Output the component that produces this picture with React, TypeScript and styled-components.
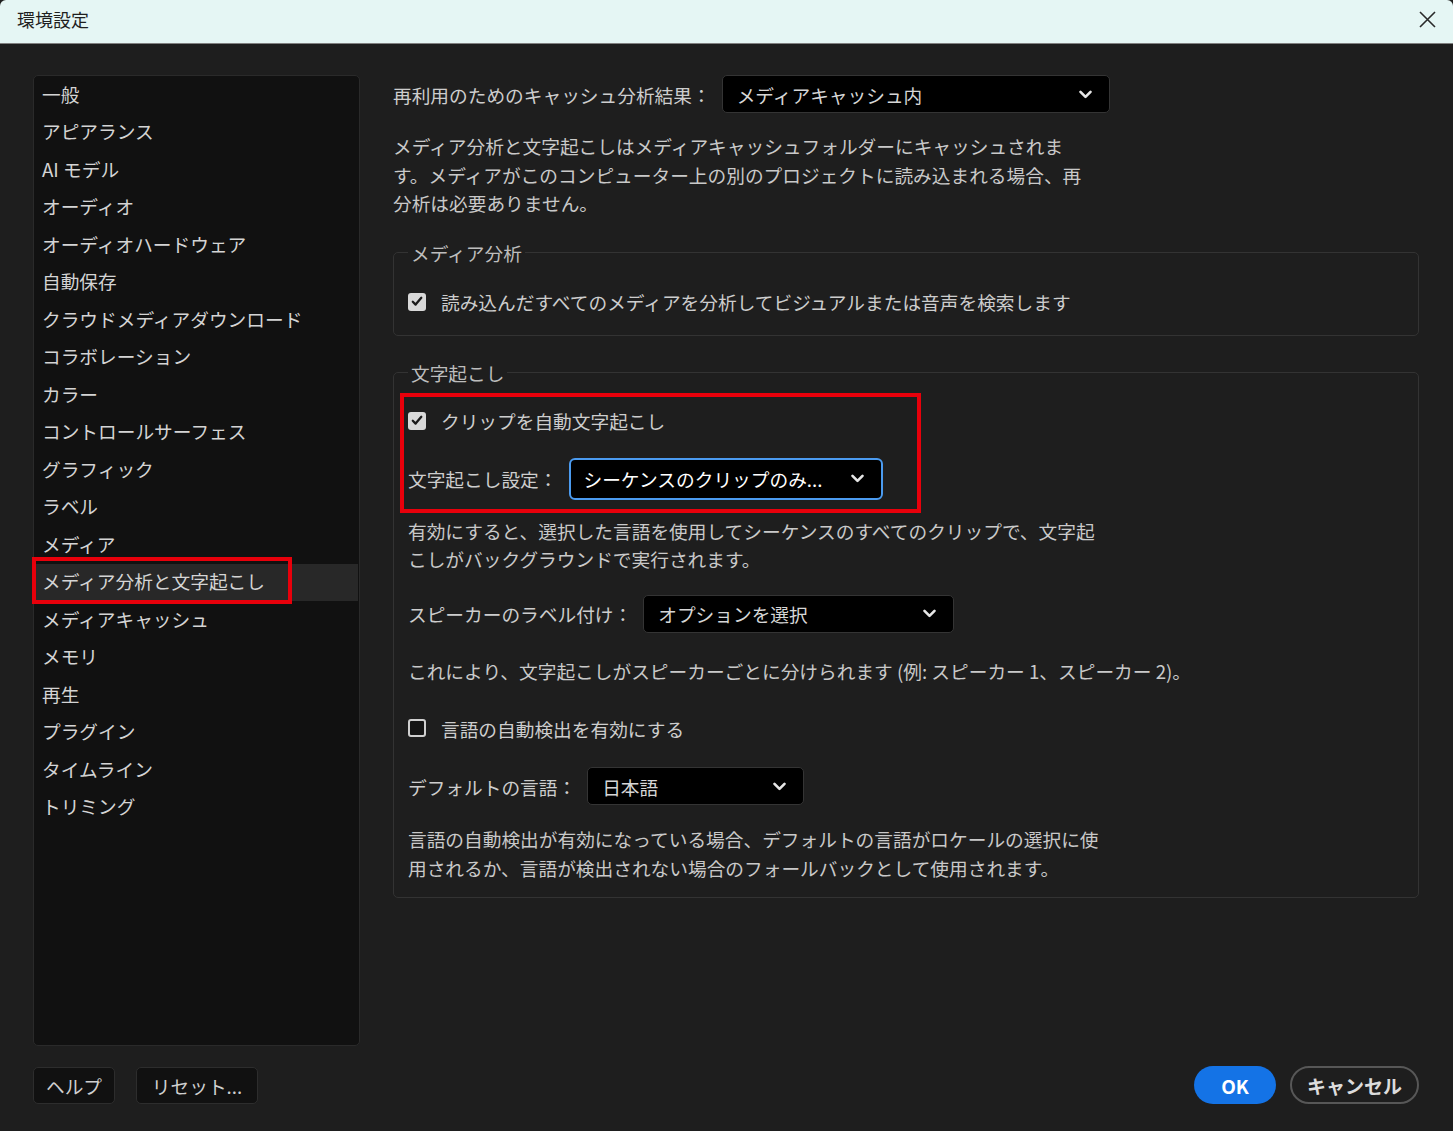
import React from 'react';
import styled, { createGlobalStyle, css } from 'styled-components';

const GlobalStyle = createGlobalStyle`
  html, body {
    margin: 0;
    padding: 0;
    background: #1e1e1e;
  }
  body {
    font-family: "Noto Sans CJK JP", "Noto Sans", sans-serif;
    color: #cfcfcf;
  }
  * {
    box-sizing: border-box;
  }
`;

const Window = styled.div`
  width: 1453px;
  height: 1131px;
  display: flex;
  flex-direction: column;
  background: #1e1e1e;
  overflow: hidden;
`;

const TitleBar = styled.div`
  height: 44px;
  flex: none;
  display: flex;
  align-items: center;
  justify-content: space-between;
  padding: 0 16px 5px 17px;
  background: #e5f6f4;
  border-bottom: 1px solid #808080;
  border-top-left-radius: 6px;
  border-top-right-radius: 6px;
  color: #1f1f1f;
  font-size: 18px;
`;

const CloseButton = styled.button`
  width: 20px;
  height: 20px;
  padding: 0;
  border: none;
  background: transparent;
  display: flex;
  align-items: center;
  justify-content: center;
`;

const Body = styled.div`
  flex: 1;
  display: grid;
  grid-template-columns: 327px 1fr;
  grid-template-rows: 1fr auto;
  column-gap: 33px;
  row-gap: 20px;
  padding: 31px 34px 27px 33px;
  min-height: 0;
`;

const Sidebar = styled.ul`
  list-style: none;
  margin: 0;
  padding: 0;
  background: #111111;
  border: 1px solid #2a2a2a;
  border-radius: 5px;
`;

const NavItem = styled.li<{ $active?: boolean }>`
  position: relative;
  height: 37.5px;
  display: flex;
  align-items: center;
  padding: 0 0 3px 8px;
  margin-right: 1px;
  font-size: 18.7px;
  color: #d4d4d4;
  white-space: nowrap;
  ${(p) =>
    p.$active &&
    css`
      background: #282828;
    `}
`;

const Highlight = styled.span`
  position: absolute;
  left: -2px;
  top: -7px;
  width: 260px;
  height: 47px;
  border: 4px solid #e8000b;
  pointer-events: none;
`;

const Content = styled.div`
  display: flex;
  flex-direction: column;
  min-width: 0;
`;

const Row = styled.div<{ $gap?: number }>`
  display: flex;
  align-items: center;
  gap: ${(p) => p.$gap ?? 11}px;
  white-space: nowrap;
`;

const Label = styled.span`
  font-size: 18.7px;
  color: #cdcdcd;
`;

const Select = styled.div<{ $width: number; $focused?: boolean }>`
  width: ${(p) => p.$width}px;
  height: 38px;
  display: flex;
  align-items: center;
  justify-content: space-between;
  padding: 0 17px 0 14px;
  background: #000;
  border: 1px solid #343434;
  border-radius: 5px;
  font-size: 18.7px;
  color: #d6d6d6;
  ${(p) =>
    p.$focused &&
    css`
      height: 42px;
      border: 2px solid #4b9bf0;
      border-radius: 6px;
      padding-left: 13px;
      color: #ffffff;
    `}
`;

const Description = styled.p<{ $top: number }>`
  margin: ${(p) => p.$top}px 0 0;
  font-size: 18.7px;
  line-height: 28.5px;
  color: #c9c9c9;
  white-space: nowrap;
`;

const Group = styled.fieldset<{ $top: number }>`
  margin: ${(p) => p.$top}px 0 0;
  padding: 0 14px;
  border: 1px solid #333333;
  border-radius: 5px;
  min-width: 0;
`;

const Legend = styled.legend`
  padding: 0 3px;
  font-size: 18.7px;
  line-height: 28px;
  color: #bdbdbd;
`;

const CheckRow = styled.label<{ $top: number; $bottom?: number }>`
  display: flex;
  align-items: center;
  gap: 15px;
  height: 28px;
  margin: ${(p) => p.$top}px 0 ${(p) => p.$bottom ?? 0}px;
  font-size: 18.7px;
  color: #cdcdcd;
  white-space: nowrap;
`;

const Box = styled.span<{ $checked?: boolean }>`
  width: 18px;
  height: 18px;
  flex: none;
  border-radius: 3px;
  display: flex;
  align-items: center;
  justify-content: center;
  ${(p) =>
    p.$checked
      ? css`
          background: #d9d9d9;
        `
      : css`
          background: #151515;
          border: 2px solid #d0d0d0;
        `}
`;

const Marked = styled.div`
  width: 521px;
  margin: 6px 0 0 -8px;
  padding: 10px 4px 9px;
  border: 4px solid #e8000b;
`;

const Spacer = styled.div<{ $h: number }>`
  height: ${(p) => p.$h}px;
`;

const Footer = styled.div`
  grid-column: 1 / -1;
  display: flex;
  align-items: center;
  justify-content: space-between;
`;

const ButtonGroup = styled.div<{ $gap: number }>`
  display: flex;
  gap: ${(p) => p.$gap}px;
`;

const PlainButton = styled.button<{ $width: number }>`
  width: ${(p) => p.$width}px;
  height: 37px;
  background: #111111;
  border: 1px solid #2d2d2d;
  border-radius: 5px;
  font-family: inherit;
  font-size: 18.7px;
  color: #cfcfcf;
  padding: 0;
`;

const PillButton = styled.button<{ $primary?: boolean; $width: number }>`
  width: ${(p) => p.$width}px;
  height: 38px;
  border-radius: 19px;
  font-family: inherit;
  font-size: 19px;
  font-weight: 700;
  padding: 0;
  ${(p) =>
    p.$primary
      ? css`
          background: #1473e6;
          border: none;
          color: #ffffff;
        `
      : css`
          background: transparent;
          border: 2px solid #575757;
          color: #dcdcdc;
        `}
`;

const Chevron = () => (
  <svg width="13" height="9" viewBox="0 0 13 9">
    <path d="M1.5 1.8 L6.5 6.8 L11.5 1.8" fill="none" stroke="#e6e6e6" strokeWidth="2.6" strokeLinecap="round" strokeLinejoin="round" />
  </svg>
);

const Check = () => (
  <svg width="12" height="11" viewBox="0 0 12 11">
    <path d="M1.8 5.8 L4.6 8.6 L10.3 1.8" fill="none" stroke="#1b1b1b" strokeWidth="2.3" strokeLinecap="round" strokeLinejoin="round" />
  </svg>
);

const navItems = [
  '一般',
  'アピアランス',
  'AI モデル',
  'オーディオ',
  'オーディオハードウェア',
  '自動保存',
  'クラウドメディアダウンロード',
  'コラボレーション',
  'カラー',
  'コントロールサーフェス',
  'グラフィック',
  'ラベル',
  'メディア',
  'メディア分析と文字起こし',
  'メディアキャッシュ',
  'メモリ',
  '再生',
  'プラグイン',
  'タイムライン',
  'トリミング',
];

const App = () => {
  const active = 'メディア分析と文字起こし';

  return (
    <Window>
      <GlobalStyle />
      <TitleBar>
        <span>環境設定</span>
        <CloseButton aria-label="閉じる">
          <svg width="17" height="17" viewBox="0 0 17 17">
            <path d="M1 1 L16 16 M16 1 L1 16" stroke="#2a2a2a" strokeWidth="1.6" />
          </svg>
        </CloseButton>
      </TitleBar>
      <Body>
        <Sidebar>
          {navItems.map((item) => (
            <NavItem key={item} $active={item === active}>
              {item}
              {item === active && <Highlight />}
            </NavItem>
          ))}
        </Sidebar>

        <Content>
          <Row>
            <Label>再利用のためのキャッシュ分析結果：</Label>
            <Select $width={388}>
              メディアキャッシュ内
              <Chevron />
            </Select>
          </Row>
          <Description $top={19}>
            メディア分析と文字起こしはメディアキャッシュフォルダーにキャッシュされま
            <br />
            す。メディアがこのコンピューター上の別のプロジェクトに読み込まれる場合、再
            <br />
            分析は必要ありません。
          </Description>

          <Group $top={21}>
            <Legend>メディア分析</Legend>
            <CheckRow $top={21} $bottom={19}>
              <Box $checked>
                <Check />
              </Box>
              読み込んだすべてのメディアを分析してビジュアルまたは音声を検索します
            </CheckRow>
          </Group>

          <Group $top={23}>
            <Legend>文字起こし</Legend>
            <Marked>
              <CheckRow $top={0}>
                <Box $checked>
                  <Check />
                </Box>
                クリップを自動文字起こし
              </CheckRow>
              <Spacer $h={23} />
              <Row>
                <Label>文字起こし設定：</Label>
                <Select $width={314} $focused>
                  シーケンスのクリップのみ...
                  <Chevron />
                </Select>
              </Row>
            </Marked>
            <Description $top={4}>
              有効にすると、選択した言語を使用してシーケンスのすべてのクリップで、文字起
              <br />
              こしがバックグラウンドで実行されます。
            </Description>
            <Spacer $h={21} />
            <Row>
              <Label>スピーカーのラベル付け：</Label>
              <Select $width={311}>
                オプションを選択
                <Chevron />
              </Select>
            </Row>
            <Description $top={24}>
              これにより、文字起こしがスピーカーごとに分けられます (例: スピーカー 1、スピーカー 2)。
            </Description>
            <CheckRow $top={29}>
              <Box />
              言語の自動検出を有効にする
            </CheckRow>
            <Spacer $h={25} />
            <Row>
              <Label>デフォルトの言語：</Label>
              <Select $width={217}>
                日本語
                <Chevron />
              </Select>
            </Row>
            <Description $top={20}>
              言語の自動検出が有効になっている場合、デフォルトの言語がロケールの選択に使
              <br />
              用されるか、言語が検出されない場合のフォールバックとして使用されます。
            </Description>
            <Spacer $h={15} />
          </Group>
        </Content>

        <Footer>
          <ButtonGroup $gap={21}>
            <PlainButton $width={82}>ヘルプ</PlainButton>
            <PlainButton $width={122}>リセット...</PlainButton>
          </ButtonGroup>
          <ButtonGroup $gap={14}>
            <PillButton $primary $width={82}>
              OK
            </PillButton>
            <PillButton $width={129}>キャンセル</PillButton>
          </ButtonGroup>
        </Footer>
      </Body>
    </Window>
  );
};

export default App;
